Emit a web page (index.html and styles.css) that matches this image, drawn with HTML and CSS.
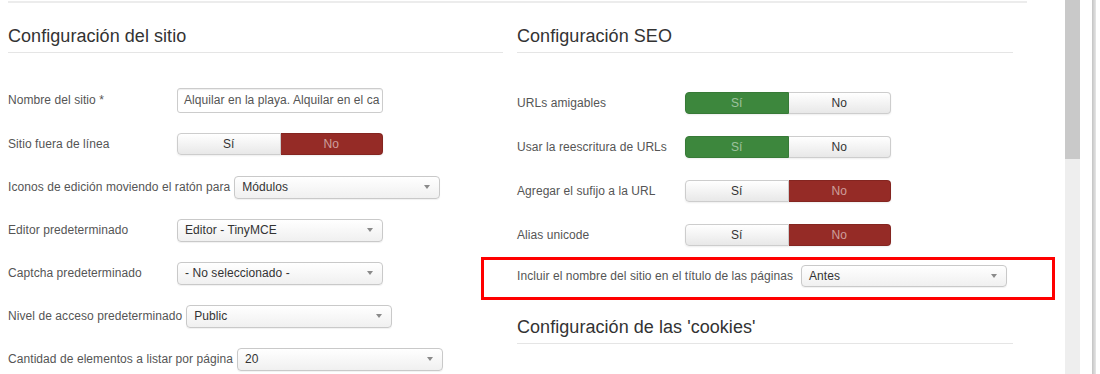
FILE: index.html
```html
<!DOCTYPE html>
<html lang="es">
<head>
<meta charset="utf-8">
<title>Configuración global</title>
<link rel="stylesheet" href="styles.css">
</head>
<body>
<div class="viewport">
  <main class="page">
    <div class="toprule"></div>
    <div class="columns">
      <section class="col col-left">
        <h2 class="legend">Configuración del sitio</h2>
        <div class="rows rows-left">
          <div class="row row-first">
            <label class="lbl">Nombre del sitio *</label>
            <div class="input">Alquilar en la playa. Alquilar en el ca</div>
          </div>
          <div class="row">
            <label class="lbl">Sitio fuera de línea</label>
            <div class="toggle"><span class="tbtn">Sí</span><span class="tbtn on-no">No</span></div>
          </div>
          <div class="row">
            <label class="lbl">Iconos de edición moviendo el ratón para</label>
            <div class="select"><span>Módulos</span><i class="caret"></i></div>
          </div>
          <div class="row">
            <label class="lbl">Editor predeterminado</label>
            <div class="select"><span>Editor - TinyMCE</span><i class="caret"></i></div>
          </div>
          <div class="row">
            <label class="lbl">Captcha predeterminado</label>
            <div class="select"><span>- No seleccionado -</span><i class="caret"></i></div>
          </div>
          <div class="row">
            <label class="lbl">Nivel de acceso predeterminado</label>
            <div class="select"><span>Public</span><i class="caret"></i></div>
          </div>
          <div class="row">
            <label class="lbl">Cantidad de elementos a listar por página</label>
            <div class="select"><span>20</span><i class="caret"></i></div>
          </div>
        </div>
      </section>
      <section class="col col-right">
        <h2 class="legend">Configuración SEO</h2>
        <div class="rows rows-right">
          <div class="row row-r">
            <label class="lbl lbl-r">URLs amigables</label>
            <div class="toggle"><span class="tbtn on-yes">Sí</span><span class="tbtn">No</span></div>
          </div>
          <div class="row row-r">
            <label class="lbl lbl-r">Usar la reescritura de URLs</label>
            <div class="toggle"><span class="tbtn on-yes">Sí</span><span class="tbtn">No</span></div>
          </div>
          <div class="row row-r">
            <label class="lbl lbl-r">Agregar el sufijo a la URL</label>
            <div class="toggle"><span class="tbtn">Sí</span><span class="tbtn on-no">No</span></div>
          </div>
          <div class="row row-r">
            <label class="lbl lbl-r">Alias unicode</label>
            <div class="toggle"><span class="tbtn">Sí</span><span class="tbtn on-no">No</span></div>
          </div>
        </div>
        <div class="highlight">
          <label class="lbl lbl-hl">Incluir el nombre del sitio en el título de las páginas</label>
          <div class="select"><span>Antes</span><i class="caret"></i></div>
        </div>
        <h2 class="legend legend-2">Configuración de las 'cookies'</h2>
      </section>
    </div>
  </main>
  <div class="scrolltrack"><div class="thumb"></div></div>
  <div class="edge"></div>
</div>
</body>
</html>
```
FILE: styles.css
```css
* {
  box-sizing: border-box;
  margin: 0;
  padding: 0;
}

html,
body {
  width: 1100px;
  height: 374px;
  overflow: hidden;
  background: #fff;
}

body {
  font-family: "Liberation Sans", Arial, sans-serif;
  font-size: 12px;
  letter-spacing: 0.07px;
  color: #555;
}

.viewport {
  display: flex;
  height: 374px;
}

.page {
  width: 1065px;
  flex: none;
  padding-left: 8px;
}

.toprule {
  width: 1019px;
  height: 2px;
  margin-top: 1px;
  background: #ececec;
}

.columns {
  display: flex;
  gap: 14px;
}

.col-left {
  width: 495px;
}

.col-right {
  width: 496px;
}

.legend {
  font-size: 18px;
  font-weight: normal;
  line-height: 20px;
  letter-spacing: 0.05px;
  color: #333;
  margin-top: 23px;
  padding-bottom: 6px;
  border-bottom: 1px solid #e5e5e5;
}

.legend-2 {
  margin-top: 17px;
}

.rows {
  display: flex;
  flex-direction: column;
}

.rows-left {
  margin-top: 34px;
  gap: 19px;
}

.rows-right {
  margin-top: 39px;
  gap: 22px;
}

.row {
  display: flex;
  align-items: center;
  height: 24px;
}

.row-first {
  height: 26px;
}

.row-r {
  height: 22px;
}

.lbl {
  min-width: 165px;
  margin-right: 4px;
  white-space: nowrap;
  color: #555;
}

.lbl-r {
  min-width: 164px;
}

.lbl-hl {
  min-width: 0;
  margin-right: 8px;
}

.input {
  width: 206px;
  height: 25px;
  line-height: 23px;
  padding: 0 3px 0 6px;
  border: 1px solid #ccc;
  border-radius: 3px;
  box-shadow: inset 0 1px 1px rgba(0, 0, 0, 0.07);
  color: #555;
  white-space: nowrap;
  overflow: hidden;
  background: #fff;
}

.toggle {
  display: flex;
  width: 206px;
  height: 22px;
  border-radius: 4px;
  box-shadow: 0 1px 2px rgba(0, 0, 0, 0.07);
}

.tbtn {
  flex: 1;
  display: flex;
  align-items: center;
  justify-content: center;
  background: linear-gradient(#ffffff, #e8e8e8);
  border: 1px solid #cdcdcd;
  color: #333;
}

.tbtn:first-child {
  border-radius: 4px 0 0 4px;
}

.tbtn:last-child {
  border-left: 0;
  border-radius: 0 4px 4px 0;
}

.on-yes {
  background: #3d873d;
  border-color: #377a37;
  color: rgba(255, 255, 255, 0.5);
}

.on-no {
  background: #952b26;
  border-color: #842520;
  color: rgba(255, 255, 255, 0.55);
}

.select {
  display: flex;
  align-items: center;
  justify-content: space-between;
  width: 206px;
  height: 23px;
  padding: 0 9px 0 7px;
  border: 1px solid #c9c9c9;
  border-radius: 4px;
  background: linear-gradient(#ffffff, #f0f0f0);
  box-shadow: 0 1px 1px rgba(0, 0, 0, 0.06);
  color: #333;
}

.caret {
  width: 0;
  height: 0;
  border-left: 3.5px solid transparent;
  border-right: 3.5px solid transparent;
  border-top: 4px solid #8a8a8a;
}

.highlight {
  display: flex;
  align-items: center;
  margin: 11px -42px 0 -36px;
  padding: 5px 0 10px 33px;
  border: 3px solid #ff0000;
}

.highlight .select {
  height: 22px;
}

.scrolltrack {
  width: 15px;
  flex: none;
  background: #eeeeee;
}

.thumb {
  height: 159px;
  background: #c9c9c9;
}

.edge {
  width: 4px;
  flex: none;
  margin-left: 12px;
  background: linear-gradient(to right, #c4c4c4, #e6e6e6);
}
```
